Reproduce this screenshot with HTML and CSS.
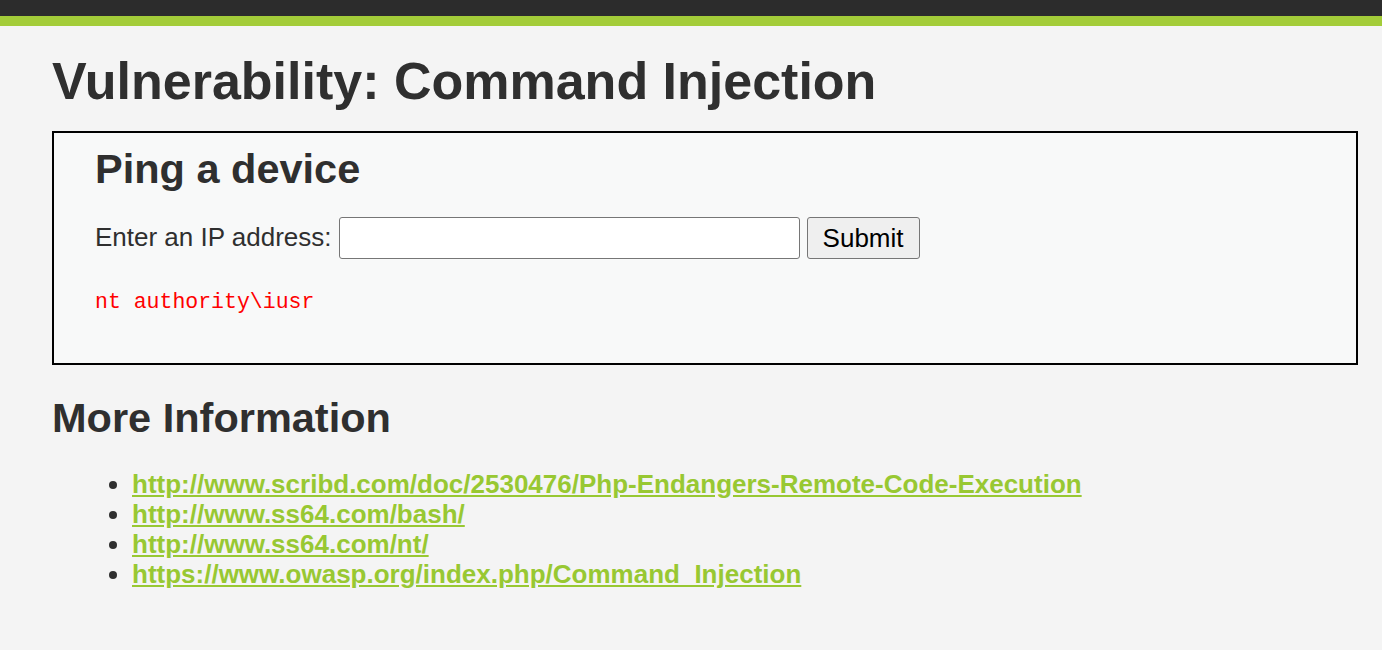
FILE: index.html
```html
<!DOCTYPE html>
<html>
<head>
<meta charset="utf-8">
<link rel="stylesheet" href="styles.css">
</head>
<body>
<div class="topbar"></div>
<div class="greenbar"></div>
<main class="main">
  <h1 class="title">Vulnerability: Command Injection</h1>
  <div class="vulnerable-code-area">
    <h2 class="box-title">Ping a device</h2>
    <form class="ping-form">
      <label class="ip-label">Enter an IP address:</label>
      <input class="ip-input" type="text">
      <button class="submit-btn" type="button">Submit</button>
    </form>
    <pre class="output">nt authority\iusr</pre>
  </div>
  <h2 class="more-title">More Information</h2>
  <ul class="links">
    <li><a href="#">http://www.scribd.com/doc/2530476/Php-Endangers-Remote-Code-Execution</a></li>
    <li><a href="#">http://www.ss64.com/bash/</a></li>
    <li><a href="#">http://www.ss64.com/nt/</a></li>
    <li><a href="#">https://www.owasp.org/index.php/Command_Injection</a></li>
  </ul>
</main>
</body>
</html>
```
FILE: styles.css
```css
html, body {
  margin: 0;
  padding: 0;
  background: #f4f4f4;
  font-family: "Liberation Sans", Arial, sans-serif;
  color: #2f2f2f;
}
.topbar {
  height: 16px;
  background: #2c2c2c;
}
.greenbar {
  height: 10px;
  background: #a3cc39;
}
.main {
  padding: 0 24px 40px 52px;
}
.title {
  margin: 0;
  padding-top: 25px;
  font-size: 52px;
  line-height: 60px;
  font-weight: bold;
}
.vulnerable-code-area {
  margin-top: 20px;
  border: 2px solid #000;
  background: #f8f9f9;
  padding: 12px 41px 47px 41px;
}
.box-title {
  margin: 0;
  font-size: 41.5px;
  line-height: 48px;
  font-weight: bold;
}
.ping-form {
  margin-top: 23px;
  display: flex;
  align-items: center;
}
.ip-label {
  font-size: 26px;
  margin-right: 7px;
}
.ip-input {
  width: 461px;
  height: 42px;
  box-sizing: border-box;
  border: 1px solid #767676;
  border-radius: 3px;
  background: #fff;
  margin: 0;
}
.submit-btn {
  height: 42px;
  width: 113px;
  box-sizing: border-box;
  border: 1px solid #767676;
  border-radius: 3px;
  background: #efefef;
  font-family: "Liberation Sans", Arial, sans-serif;
  font-size: 26px;
  color: #000;
  margin: 1px 0 0 7px;
  padding: 0;
}
.output {
  margin: 29px 0 0 0;
  color: #ff0000;
  font-family: "Liberation Mono", "Courier New", monospace;
  font-size: 21.5px;
  line-height: 28px;
}
.more-title {
  margin: 29px 0 0 0;
  font-size: 41.5px;
  line-height: 48px;
  font-weight: bold;
}
.links {
  margin: 27px 0 0 0;
  padding-left: 80px;
  font-size: 26px;
  line-height: 30px;
}
.links a {
  color: #98c832;
  font-weight: bold;
  text-decoration: underline;
}
```
